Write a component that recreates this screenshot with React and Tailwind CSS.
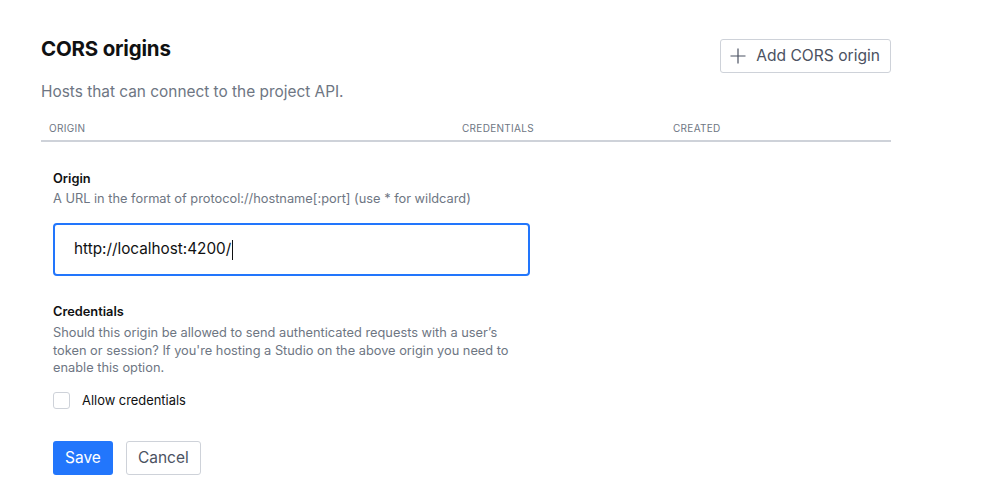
import React from 'react';

function PlusIcon() {
  return (
    <svg width="16" height="16" viewBox="0 0 16 16" fill="none" stroke="currentColor" strokeWidth="1.2">
      <path d="M8 0.5v15M0.5 8h15" />
    </svg>
  );
}

export default function App() {
  return (
    <div className="min-h-screen bg-white text-[#101112]" style={{ fontFamily: 'Inter, "Noto Sans", sans-serif' }}>
      <div className="w-[850px] ml-[41px] pt-[36px]">
        {/* Header */}
        <div className="flex items-start justify-between">
          <div>
            <h2 className="text-[20.5px] font-bold leading-[25px] tracking-[-0.2px]">CORS origins</h2>
            <p className="mt-[21px] text-[15.4px] leading-[20px] text-[#6e7683]">Hosts that can connect to the project API.</p>
          </div>
          <button className="mt-[3px] flex h-[34px] items-center gap-[10px] rounded-[3px] border border-[#ced2d9] pl-[9px] pr-[10px] text-[15.6px] text-[#4b5262]">
            <PlusIcon />
            <span>Add CORS origin</span>
          </button>
        </div>

        {/* Table header */}
        <div className="mt-[20px] flex border-b-2 border-[#ced2d9] pb-[6px] text-[10px] leading-[12px] tracking-[0.3px] text-[#6e7683]">
          <div className="w-[421px] pl-[8px]">ORIGIN</div>
          <div className="w-[211px]">CREDENTIALS</div>
          <div>CREATED</div>
        </div>

        {/* Form */}
        <div className="ml-[12px] mt-[29px] w-[477px]">
          <div className="text-[12.8px] font-semibold leading-[16px]">Origin</div>
          <div className="mt-[4px] text-[12.8px] leading-[16px] text-[#6e7683]">A URL in the format of protocol://hostname[:port] (use * for wildcard)</div>
          <div className="mt-[16px] flex h-[53px] items-center rounded-[4px] border-2 border-[#2276fc] pl-[19px] text-[15.3px] text-[#101112]">
            http://localhost:4200/<span className="ml-[1px] inline-block h-[20px] w-px bg-[#101112]" />
          </div>

          <div className="mt-[28px] text-[12.8px] font-semibold leading-[16px]">Credentials</div>
          <p className="mt-[4px] w-[462px] text-[12.8px] leading-[17.5px] text-[#6e7683]">
            Should this origin be allowed to send authenticated requests with a user’s token or session? If you're hosting a Studio on the above origin you need to enable this option.
          </p>
          <label className="mt-[14px] flex items-center gap-[12px] text-[12.9px] text-[#101112]">
            <span className="h-[17px] w-[17px] rounded-[3px] border border-[#ced2d9] bg-white" />
            <span>Allow credentials</span>
          </label>

          <div className="mt-[31px] flex gap-[13px]">
            <button className="h-[34px] rounded-[3px] bg-[#2276fc] px-[12px] text-[15.5px] text-white">Save</button>
            <button className="h-[34px] rounded-[3px] border border-[#ced2d9] px-[11px] text-[15.5px] text-[#4b5262]">Cancel</button>
          </div>
        </div>
      </div>
    </div>
  );
}
